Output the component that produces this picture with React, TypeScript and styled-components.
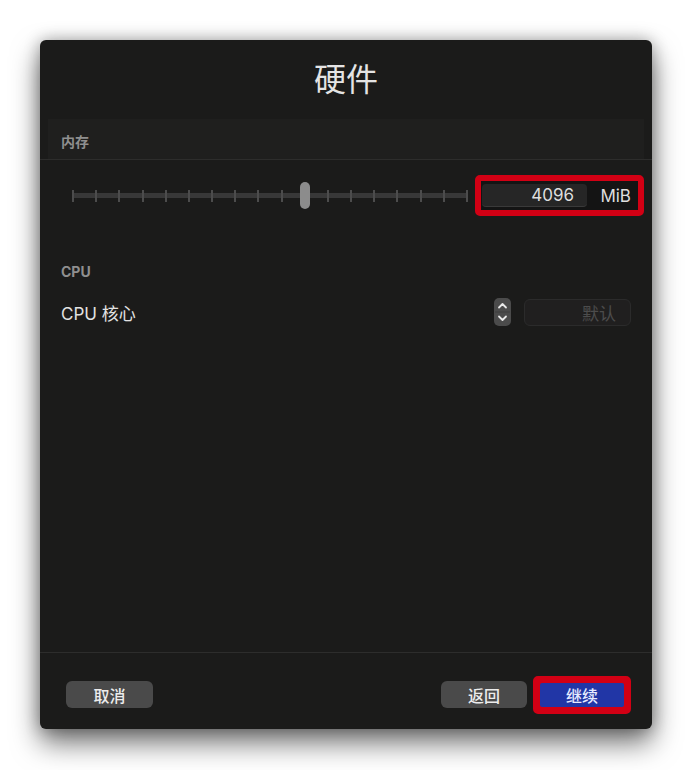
import styled, { createGlobalStyle } from "styled-components";

const GlobalStyle = createGlobalStyle`
  html, body {
    margin: 0;
    padding: 0;
    background: #ffffff;
  }
  body {
    font-family: "Inter", "Noto Sans CJK SC", sans-serif;
  }
`;

const Page = styled.div`
  width: 692px;
  height: 770px;
  padding: 40px 0 0 40px;
  box-sizing: border-box;
`;

const Sheet = styled.div`
  width: 612px;
  height: 689px;
  background: #1b1b1a;
  border-radius: 6px;
  display: flex;
  flex-direction: column;
  box-shadow: 0 14px 28px rgba(0, 0, 0, 0.55), 0 0 16px rgba(0, 0, 0, 0.3);
  overflow: hidden;
`;

const Title = styled.div`
  height: 79px;
  padding-bottom: 6px;
  box-sizing: border-box;
  display: flex;
  align-items: center;
  justify-content: center;
  color: #e4e4e4;
  font-size: 32px;
  font-weight: 400;
  font-family: "Noto Sans CJK SC", sans-serif;
`;

const MemorySection = styled.div`
  border-bottom: 1px solid #2d2d2c;
`;

const Band = styled.div`
  margin: 0 8px;
  height: 40px;
  background: #1f1f1e;
  display: flex;
  align-items: center;
  padding: 6px 0 0 13px;
  box-sizing: border-box;
`;

const GroupLabel = styled.div`
  color: #8f8f8f;
  font-size: 14px;
  font-weight: 700;
  line-height: 20px;
`;

const MemoryRow = styled.div`
  display: flex;
  align-items: center;
  gap: 7px;
  padding: 15px 8px 0 32px;
`;

const Slider = styled.div`
  position: relative;
  width: 396px;
  height: 26px;
  background: linear-gradient(#383838, #383838) center / 100% 5px no-repeat;
`;

const Ticks = styled.div`
  height: 100%;
  display: flex;
  justify-content: space-between;
  align-items: center;
`;

const Tick = styled.span`
  width: 2px;
  height: 12px;
  background: #4c4c4c;
`;

const Thumb = styled.span`
  position: absolute;
  top: -1px;
  width: 10px;
  height: 27px;
  margin-left: -5px;
  border-radius: 5px;
  background: #8c8c8c;
`;

const Highlight = styled.div`
  border: 6px solid #d20014;
  border-radius: 5px;
  background: #141414;
  display: flex;
  align-items: center;
  box-sizing: border-box;
`;

const ValueBox = styled(Highlight)`
  width: 169px;
  height: 41px;
  padding: 0 7px 0 1px;
`;

const NumberField = styled.div`
  width: 105px;
  height: 23px;
  background: #262626;
  border-radius: 4px;
  border-bottom: 1px solid #3a3a3a;
  box-sizing: border-box;
  color: #dedede;
  font-size: 17px;
  line-height: 23px;
  text-align: right;
  padding-right: 13px;
`;

const Unit = styled.span`
  margin-left: auto;
  color: #dedede;
  font-size: 17px;
`;

const CpuLabel = styled(GroupLabel)`
  margin: 46px 0 0 21px;
`;

const CpuRow = styled.div`
  display: flex;
  align-items: center;
  justify-content: space-between;
  margin-top: 16px;
  padding: 0 21px;
`;

const RowLabel = styled.span`
  color: #e2e2e2;
  font-size: 17px;
`;

const Controls = styled.div`
  display: flex;
  align-items: center;
  gap: 13px;
`;

const Placeholder = styled.div`
  width: 107px;
  height: 27px;
  box-sizing: border-box;
  border-radius: 6px;
  background: #201f1f;
  border: 1px solid #2b2b2b;
  color: #4c4c4c;
  font-size: 17px;
  line-height: 25px;
  text-align: right;
  padding-right: 14px;
  font-family: "Noto Sans CJK SC", sans-serif;
`;

const Spacer = styled.div`
  flex: 1;
`;

const Footer = styled.div`
  height: 69px;
  border-top: 1px solid #2d2d2c;
  display: flex;
  align-items: center;
  padding: 7px 21px 0 26px;
  box-sizing: content-box;
`;

const Button = styled.div<{ $primary?: boolean; $width: number }>`
  width: ${({ $width }) => $width}px;
  height: ${({ $primary }) => ($primary ? 24 : 27)}px;
  border-radius: ${({ $primary }) => ($primary ? 2 : 6)}px;
  background: ${({ $primary }) => ($primary ? "#2136a6" : "#4a4a4a")};
  color: ${({ $primary }) => ($primary ? "#e6eaff" : "#ececec")};
  display: flex;
  align-items: center;
  justify-content: center;
  font-size: 16px;
  font-weight: 500;
  font-family: "Noto Sans CJK SC", sans-serif;
`;

const PrimaryBox = styled(Highlight)`
  width: 98px;
  height: 38px;
  margin-left: 6px;
  padding: 0 1px;
  justify-content: center;
  background: #d20014;
`;

const Stepper = () => (
  <svg width="17" height="28" viewBox="0 0 17 28">
    <rect x="0" y="0" width="17" height="28" rx="5" fill="#4b4b4b" />
    <line x1="1" y1="14" x2="16" y2="14" stroke="#3e3e3e" strokeWidth="1" />
    <path d="M5 9.5 L8.5 6 L12 9.5" fill="none" stroke="#e8e8e8" strokeWidth="1.8" strokeLinecap="round" strokeLinejoin="round" />
    <path d="M5 18.5 L8.5 22 L12 18.5" fill="none" stroke="#e8e8e8" strokeWidth="1.8" strokeLinecap="round" strokeLinejoin="round" />
  </svg>
);

const TICKS = 18;
const VALUE = 10;

const App = () => {
  return (
    <>
      <GlobalStyle />
      <Page>
        <Sheet>
          <Title>硬件</Title>
          <MemorySection>
            <Band>
              <GroupLabel>内存</GroupLabel>
            </Band>
          </MemorySection>
          <MemoryRow>
            <Slider>
              <Ticks>
                {Array.from({ length: TICKS }).map((_, i) => (
                  <Tick key={i} />
                ))}
              </Ticks>
              <Thumb style={{ left: `${(VALUE / (TICKS - 1)) * 100}%` }} />
            </Slider>
            <ValueBox>
              <NumberField>4096</NumberField>
              <Unit>MiB</Unit>
            </ValueBox>
          </MemoryRow>
          <CpuLabel>CPU</CpuLabel>
          <CpuRow>
            <RowLabel>CPU 核心</RowLabel>
            <Controls>
              <Stepper />
              <Placeholder>默认</Placeholder>
            </Controls>
          </CpuRow>
          <Spacer />
          <Footer>
            <Button $width={87}>取消</Button>
            <Spacer />
            <Button $width={86}>返回</Button>
            <PrimaryBox>
              <Button $primary $width={84}>继续</Button>
            </PrimaryBox>
          </Footer>
        </Sheet>
      </Page>
    </>
  );
};

export default App;
